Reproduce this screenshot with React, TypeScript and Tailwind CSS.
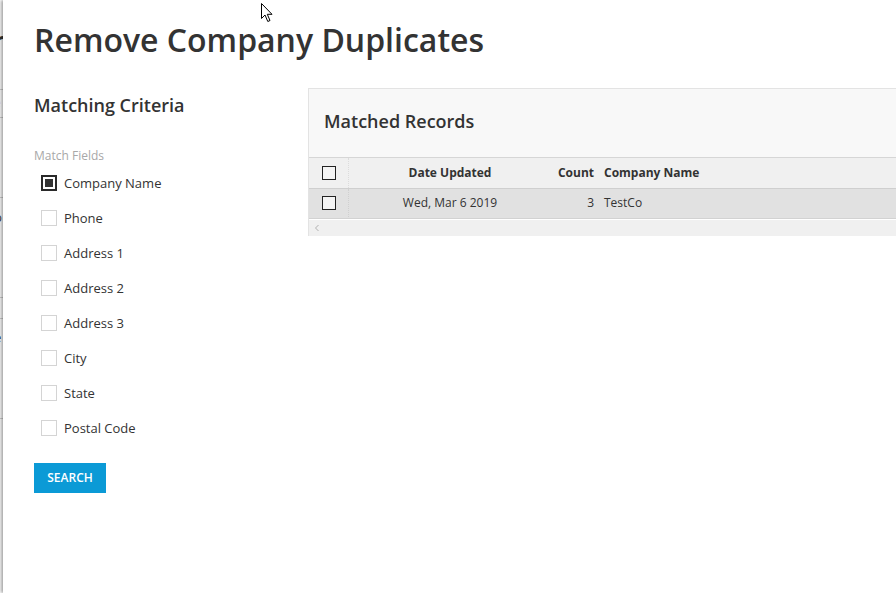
import React from "react";

const fields = [
  "Company Name",
  "Phone",
  "Address 1",
  "Address 2",
  "Address 3",
  "City",
  "State",
  "Postal Code",
];

function FieldCheckbox({ checked }: { checked: boolean }) {
  if (checked) {
    return (
      <span className="flex h-[16px] w-[16px] items-center justify-center border-[2px] border-[#2a2a2a] bg-white">
        <span className="h-[8px] w-[8px] bg-[#333]" />
      </span>
    );
  }
  return <span className="h-[16px] w-[16px] border border-[#d4d4d4] bg-white" />;
}

function GridCheckbox() {
  return <span className="block h-[14px] w-[14px] border-[1.5px] border-[#222] bg-[#f4f4f4]" />;
}

function Cursor() {
  return (
    <svg
      className="absolute left-[261px] top-[3px]"
      width="13"
      height="20"
      viewBox="0 0 13 20"
    >
      <path
        d="M0.5 0.5 L0.5 15.5 L4 12 L6.8 18.5 L9 17.5 L6.3 11.3 L11 11.3 Z"
        fill="#fff"
        stroke="#000"
        strokeWidth="1"
        strokeLinejoin="round"
      />
    </svg>
  );
}

export default function App() {
  return (
    <div className="relative flex h-[593px] w-[896px] overflow-hidden bg-white font-['Open_Sans',sans-serif] text-[#333]">
      {/* page behind the dialog, just peeking out on the left */}
      <div className="relative w-[3px] shrink-0 overflow-hidden bg-white">
        <span className="absolute left-[-8px] top-[22px] text-[32px] font-semibold leading-[40px] text-[#333]">n</span>
        <div className="absolute left-0 top-[89px] h-px w-full bg-[#d0d0d0]" />
        <span className="absolute left-[-6px] top-[96px] text-[12px] leading-[14px] text-[#e8b0b0]">e</span>
        <div className="absolute left-0 top-[117px] h-px w-full bg-[#d0d0d0]" />
        <div className="absolute left-0 top-[197px] h-px w-full bg-[#d0d0d0]" />
        <span className="absolute left-[-6px] top-[209px] text-[13px] leading-[16px] text-[#444]">p</span>
        <div className="absolute left-0 top-[297px] h-px w-full bg-[#d0d0d0]" />
        <div className="absolute left-0 top-[318px] h-px w-full bg-[#d0d0d0]" />
        <span className="absolute left-[-6px] top-[329px] text-[13px] leading-[16px] text-[#333]">e</span>
        <div className="absolute left-0 top-[418px] h-px w-full bg-[#d0d0d0]" />
      </div>

      {/* dialog */}
      <div className="relative flex-1 bg-white pl-[31px] shadow-[-2px_0_3px_rgba(0,0,0,0.35)]">
        <h1 className="pt-[18px] text-[32px] font-semibold leading-[44px] text-[#333]">
          Remove Company Duplicates
        </h1>

        <div className="mt-[26px] flex">
          {/* criteria */}
          <div className="w-[274px] shrink-0">
            <h2 className="pt-[5px] text-[18px] font-semibold leading-[24px] text-[#333]">
              Matching Criteria
            </h2>
            <div className="mt-[31px] text-[12px] leading-[16px] text-[#a8a8a8]">Match Fields</div>
            <ul className="mt-[1px] flex flex-col">
              {fields.map((f, i) => (
                <li key={f} className="flex h-[35px] items-center pl-[7px]">
                  <FieldCheckbox checked={i === 0} />
                  <span className="ml-[7px] text-[13px] leading-[18px] text-[#333]">{f}</span>
                </li>
              ))}
            </ul>
            <button className="mt-[18px] h-[30px] w-[72px] bg-[#0b9ad6] text-[12px] font-semibold text-white">
              SEARCH
            </button>
          </div>

          {/* results */}
          <div className="flex-1 self-start">
            <div className="border-l border-t border-[#e3e3e3]">
              <div className="flex h-[68px] items-center bg-[#f8f8f8] pb-[4px] pl-[15px]">
                <h2 className="text-[18px] font-semibold leading-[24px] text-[#333]">Matched Records</h2>
              </div>
              <div className="flex h-[31px] items-center border-t border-[#d6d6d6] bg-[#f0f0f0] text-[12px] font-bold text-[#333]">
                <div className="flex h-full w-[40px] items-center justify-center border-r border-dotted border-[#dcdcdc]">
                  <GridCheckbox />
                </div>
                <div className="w-[202px] text-center">Date Updated</div>
                <div className="w-[48px] pr-[5px] text-right">Count</div>
                <div className="pl-[5px]">Company Name</div>
              </div>
              <div className="flex h-[31px] items-center border-y border-t-[#cfcfcf] border-b-[#d2d2d2] bg-[#e1e1e1] pb-[1px] text-[12px] text-[#333]">
                <div className="flex h-full w-[40px] items-center justify-center border-r border-dotted border-[#d0d0d0]">
                  <GridCheckbox />
                </div>
                <div className="w-[202px] text-center">Wed, Mar 6 2019</div>
                <div className="w-[48px] pr-[5px] text-right">3</div>
                <div className="pl-[5px]">TestCo</div>
              </div>
              <div className="flex h-[17px] items-center border-t border-white bg-[#f0f0f0] pl-[5px]">
                <svg width="6" height="8" viewBox="0 0 6 8">
                  <path d="M4.5 1 L1.5 4 L4.5 7" fill="none" stroke="#b0b0b0" strokeWidth="1" />
                </svg>
              </div>
            </div>
          </div>
        </div>
      </div>

      <Cursor />
    </div>
  );
}
